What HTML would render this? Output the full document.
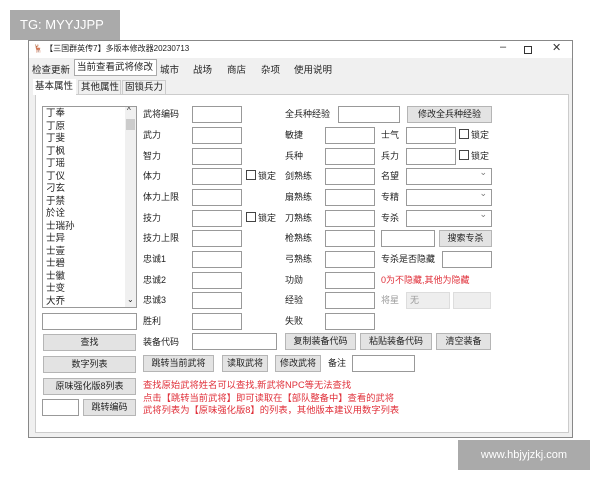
<!DOCTYPE html>
<html><head><meta charset="utf-8"><style>
*{box-sizing:border-box;margin:0;padding:0}
body{width:600px;height:480px;background:#fff;position:relative;overflow:hidden;font-family:"Liberation Sans","Noto Sans CJK SC",sans-serif;font-size:9px;color:#222}
.a{position:absolute;white-space:nowrap}
.in{position:absolute;border:1px solid #999;background:#fff;height:17px}
.bt{position:absolute;border:1px solid #b5b5b5;background:#e3e3e3;height:17px;text-align:center;line-height:15px;font-size:9px;white-space:nowrap;overflow:hidden}
.lb{position:absolute;white-space:nowrap;line-height:17px}
.cb{position:absolute;white-space:nowrap;line-height:17px}
.cb:before{content:"";display:inline-block;width:8px;height:8px;border:1px solid #444;margin-right:2px;vertical-align:-1px}
.cmb{position:absolute;border:1px solid #999;background:#fff;height:17px;width:86px}
.cmb:after{content:"⌄";position:absolute;right:4px;top:-2px;font-size:9px;color:#777}
.red{color:#e0303a}
</style></head><body>
<div class="a" style="left:10px;top:10px;width:110px;height:30px;background:#aaa;color:#fff;font-size:13px;line-height:30px;padding-left:10px">TG: MYYJJPP</div>
<div class="a" style="left:28px;top:40px;width:545px;height:398px;border:1px solid #888;background:#f0f0f0"></div>
<div class="a" style="left:29px;top:41px;width:543px;height:17px;background:#fff"></div>
<div class="a" style="left:33px;top:43px;font-size:8px">🦌 【三国群英传7】多版本修改器20230713</div>
<div class="a" style="left:500px;top:41px;font-size:11px;color:#333">–</div>
<div class="a" style="left:524px;top:46px;width:8px;height:8px;border:1px solid #333"></div>
<div class="a" style="left:552px;top:41px;font-size:11px;color:#333">✕</div>
<div class="a" style="left:32px;top:62px;font-size:9.5px">检查更新</div>
<div class="a" style="left:74px;top:59px;width:83px;height:17px;border:1px solid #aaa;background:#fff;padding-left:2px;line-height:15px;font-size:9.5px">当前查看武将修改</div>
<div class="a" style="left:160px;top:62px;font-size:9.5px">城市</div>
<div class="a" style="left:193px;top:62px;font-size:9.5px">战场</div>
<div class="a" style="left:227px;top:62px;font-size:9.5px">商店</div>
<div class="a" style="left:261px;top:62px;font-size:9.5px">杂项</div>
<div class="a" style="left:294px;top:62px;font-size:9.5px">使用说明</div>
<div class="a" style="left:35px;top:94px;width:534px;height:339px;background:#fff;border:1px solid #ccc"></div>
<div class="a" style="left:33px;top:79px;width:43px;height:16px;background:#fff;padding-left:2px;line-height:16px;font-size:9.5px">基本属性</div>
<div class="a" style="left:78px;top:80px;width:43px;height:15px;border:1px solid #ccc;padding-left:2px;line-height:14px;font-size:9.5px">其他属性</div>
<div class="a" style="left:122px;top:80px;width:44px;height:15px;border:1px solid #ccc;padding-left:2px;line-height:14px;font-size:9.5px">固锁兵力</div>
<div class="a" style="left:42px;top:106px;width:95px;height:202px;border:1px solid #999;background:#fff;padding:1px 0 0 3px;line-height:12.5px;font-size:9.5px">丁奉<br>丁原<br>丁斐<br>丁枫<br>丁瑶<br>丁仪<br>刁玄<br>于禁<br>於诠<br>士瑞孙<br>士异<br>士壹<br>士碧<br>士徽<br>士变<br>大乔</div>
<div class="a" style="left:125px;top:107px;width:11px;height:200px;background:#f0f0f0"></div>
<div class="a" style="left:126px;top:119px;width:9px;height:11px;background:#ccc"></div>
<div class="a" style="left:127px;top:106px;font-size:8px">^</div>
<div class="a" style="left:127px;top:295px;font-size:8px">⌄</div>
<div class="lb" style="left:143px;top:106px">武将编码</div><div class="in" style="left:192px;top:106px;width:50px"></div>
<div class="lb" style="left:143px;top:127px">武力</div><div class="in" style="left:192px;top:127px;width:50px"></div>
<div class="lb" style="left:143px;top:148px">智力</div><div class="in" style="left:192px;top:148px;width:50px"></div>
<div class="lb" style="left:143px;top:168px">体力</div><div class="in" style="left:192px;top:168px;width:50px"></div><div class="cb" style="left:246px;top:168px">锁定</div>
<div class="lb" style="left:143px;top:189px">体力上限</div><div class="in" style="left:192px;top:189px;width:50px"></div>
<div class="lb" style="left:143px;top:210px">技力</div><div class="in" style="left:192px;top:210px;width:50px"></div><div class="cb" style="left:246px;top:210px">锁定</div>
<div class="lb" style="left:143px;top:230px">技力上限</div><div class="in" style="left:192px;top:230px;width:50px"></div>
<div class="lb" style="left:143px;top:251px">忠诚1</div><div class="in" style="left:192px;top:251px;width:50px"></div>
<div class="lb" style="left:143px;top:272px">忠诚2</div><div class="in" style="left:192px;top:272px;width:50px"></div>
<div class="lb" style="left:143px;top:292px">忠诚3</div><div class="in" style="left:192px;top:292px;width:50px"></div>
<div class="lb" style="left:143px;top:313px">胜利</div><div class="in" style="left:192px;top:313px;width:50px"></div>
<div class="lb" style="left:285px;top:106px">全兵种经验</div><div class="in" style="left:338px;top:106px;width:62px"></div>
<div class="bt" style="left:407px;top:106px;width:85px">修改全兵种经验</div>
<div class="lb" style="left:285px;top:127px">敏捷</div><div class="in" style="left:325px;top:127px;width:50px"></div>
<div class="lb" style="left:285px;top:148px">兵种</div><div class="in" style="left:325px;top:148px;width:50px"></div>
<div class="lb" style="left:285px;top:168px">剑熟练</div><div class="in" style="left:325px;top:168px;width:50px"></div>
<div class="lb" style="left:285px;top:189px">扇熟练</div><div class="in" style="left:325px;top:189px;width:50px"></div>
<div class="lb" style="left:285px;top:210px">刀熟练</div><div class="in" style="left:325px;top:210px;width:50px"></div>
<div class="lb" style="left:285px;top:230px">枪熟练</div><div class="in" style="left:325px;top:230px;width:50px"></div>
<div class="lb" style="left:285px;top:251px">弓熟练</div><div class="in" style="left:325px;top:251px;width:50px"></div>
<div class="lb" style="left:285px;top:272px">功勋</div><div class="in" style="left:325px;top:272px;width:50px"></div>
<div class="lb" style="left:285px;top:292px">经验</div><div class="in" style="left:325px;top:292px;width:50px"></div>
<div class="lb" style="left:285px;top:313px">失败</div><div class="in" style="left:325px;top:313px;width:50px"></div>
<div class="lb" style="left:381px;top:127px">士气</div><div class="in" style="left:406px;top:127px;width:50px"></div><div class="cb" style="left:459px;top:127px">锁定</div>
<div class="lb" style="left:381px;top:148px">兵力</div><div class="in" style="left:406px;top:148px;width:50px"></div><div class="cb" style="left:459px;top:148px">锁定</div>
<div class="lb" style="left:381px;top:168px">名望</div><div class="cmb" style="left:406px;top:168px"></div>
<div class="lb" style="left:381px;top:189px">专精</div><div class="cmb" style="left:406px;top:189px"></div>
<div class="lb" style="left:381px;top:210px">专杀</div><div class="cmb" style="left:406px;top:210px"></div>
<div class="in" style="left:381px;top:230px;width:54px"></div><div class="bt" style="left:439px;top:230px;width:53px">搜索专杀</div>
<div class="lb" style="left:381px;top:251px">专杀是否隐藏</div><div class="in" style="left:442px;top:251px;width:50px"></div>
<div class="lb red" style="left:381px;top:272px">0为不隐藏,其他为隐藏</div>
<div class="lb" style="left:381px;top:292px;color:#999">将星</div>
<div class="a" style="left:406px;top:292px;width:44px;height:17px;background:#eee;border:1px solid #ddd;color:#999;padding-left:3px;line-height:15px">无</div>
<div class="a" style="left:453px;top:292px;width:38px;height:17px;background:#eee;border:1px solid #ddd"></div>
<div class="in" style="left:42px;top:313px;width:95px"></div>
<div class="bt" style="left:43px;top:334px;width:93px">查找</div>
<div class="bt" style="left:43px;top:356px;width:93px">数字列表</div>
<div class="bt" style="left:43px;top:378px;width:93px">原味强化版8列表</div>
<div class="in" style="left:42px;top:399px;width:37px"></div>
<div class="bt" style="left:83px;top:399px;width:53px">跳转编码</div>
<div class="lb" style="left:143px;top:334px">装备代码</div><div class="in" style="left:192px;top:333px;width:85px"></div>
<div class="bt" style="left:285px;top:333px;width:71px">复制装备代码</div>
<div class="bt" style="left:360px;top:333px;width:72px">粘贴装备代码</div>
<div class="bt" style="left:436px;top:333px;width:55px">清空装备</div>
<div class="bt" style="left:143px;top:355px;width:71px">跳转当前武将</div>
<div class="bt" style="left:222px;top:355px;width:46px">读取武将</div>
<div class="bt" style="left:275px;top:355px;width:46px">修改武将</div>
<div class="lb" style="left:328px;top:355px">备注</div><div class="in" style="left:352px;top:355px;width:63px"></div>
<div class="a red" style="left:143px;top:379px;line-height:12.5px;font-size:9.3px">查找原始武将姓名可以查找,新武将NPC等无法查找<br>点击【跳转当前武将】即可读取在【部队整备中】查看的武将<br>武将列表为【原味强化版8】的列表，其他版本建议用数字列表</div>
<div class="a" style="left:458px;top:440px;width:132px;height:30px;background:#aaa;color:#fff;font-size:11px;line-height:30px;text-align:center">www.hbjyjzkj.com</div>
</body></html>
